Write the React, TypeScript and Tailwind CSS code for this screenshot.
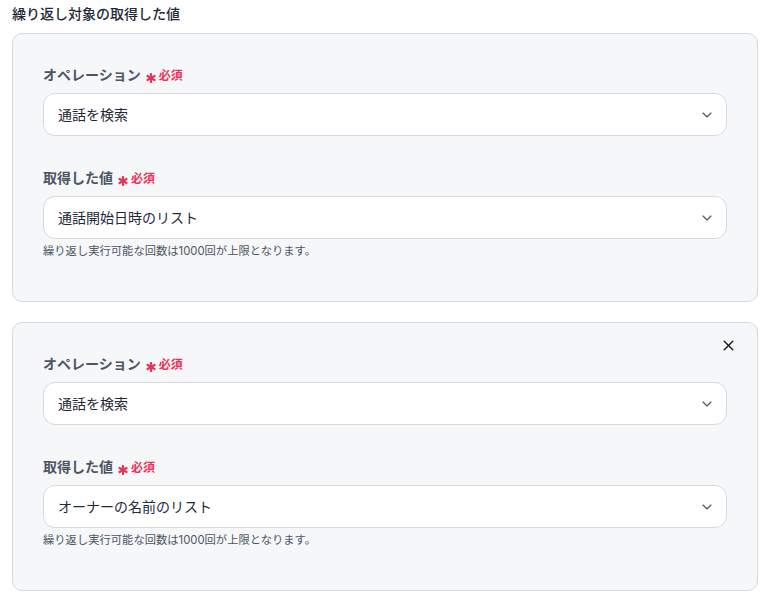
import { ChevronDown, X } from "lucide-react";

type Field = {
  label: string;
  value: string;
  hint?: string;
};

const HINT = "繰り返し実行可能な回数は1000回が上限となります。";

const blocks: { removable: boolean; fields: Field[] }[] = [
  {
    removable: false,
    fields: [
      { label: "オペレーション", value: "通話を検索" },
      { label: "取得した値", value: "通話開始日時のリスト", hint: HINT },
    ],
  },
  {
    removable: true,
    fields: [
      { label: "オペレーション", value: "通話を検索" },
      { label: "取得した値", value: "オーナーの名前のリスト", hint: HINT },
    ],
  },
];

function RequiredMark() {
  return (
    <span className="ml-[5px] text-[12px] font-bold text-[#e8345a]">
      <svg
        viewBox="0 0 10 10"
        className="relative top-[1px] mr-[3px] inline-block h-[10px] w-[10px] align-middle"
        aria-hidden="true"
      >
        <g stroke="currentColor" strokeWidth="2.2" strokeLinecap="round">
          <line x1="5" y1="1" x2="5" y2="9" />
          <line x1="1.5" y1="3" x2="8.5" y2="7" />
          <line x1="1.5" y1="7" x2="8.5" y2="3" />
        </g>
      </svg>
      必須
    </span>
  );
}

function SelectField({ field }: { field: Field }) {
  return (
    <div>
      <div className="h-5 text-[14px] font-bold leading-5 text-[#4b5563]">
        {field.label}
        <RequiredMark />
      </div>
      <button
        type="button"
        className="mt-2 flex h-[43px] w-full items-center justify-between rounded-xl border border-[#d5d9e0] bg-white pl-[14px] pr-[11px] text-left text-[14px] text-[#1f2937]"
      >
        <span>{field.value}</span>
        <ChevronDown className="h-[16px] w-[16px] text-[#4b5563]" strokeWidth={1.75} />
      </button>
      {field.hint ? (
        <p className="mt-[4px] text-[11.3px] leading-4 text-[#4b5563]">{field.hint}</p>
      ) : null}
    </div>
  );
}

export default function App() {
  return (
    <div
      className="min-h-[601px] w-[770px] bg-white px-3 pt-[3px]"
      style={{ fontFamily: 'Inter, "Noto Sans CJK JP", sans-serif' }}
    >
      <h1 className="h-[22px] text-[14px] font-medium leading-[22px] text-[#1f2937]">
        繰り返し対象の取得した値
      </h1>
      <div className="mt-2 flex flex-col gap-5">
        {blocks.map((block, i) => (
          <section
            key={i}
            className="relative flex h-[269px] flex-col gap-8 rounded-[10px] border border-[#d5d9e0] bg-[#f6f7f9] px-[30px] pt-[31px]"
          >
            {block.removable ? (
              <button
                type="button"
                className="absolute right-[20px] top-[14px] text-[#111827]"
                aria-label="削除"
              >
                <X className="h-[17px] w-[17px]" strokeWidth={2} />
              </button>
            ) : null}
            {block.fields.map((field) => (
              <SelectField key={field.label} field={field} />
            ))}
          </section>
        ))}
      </div>
    </div>
  );
}
